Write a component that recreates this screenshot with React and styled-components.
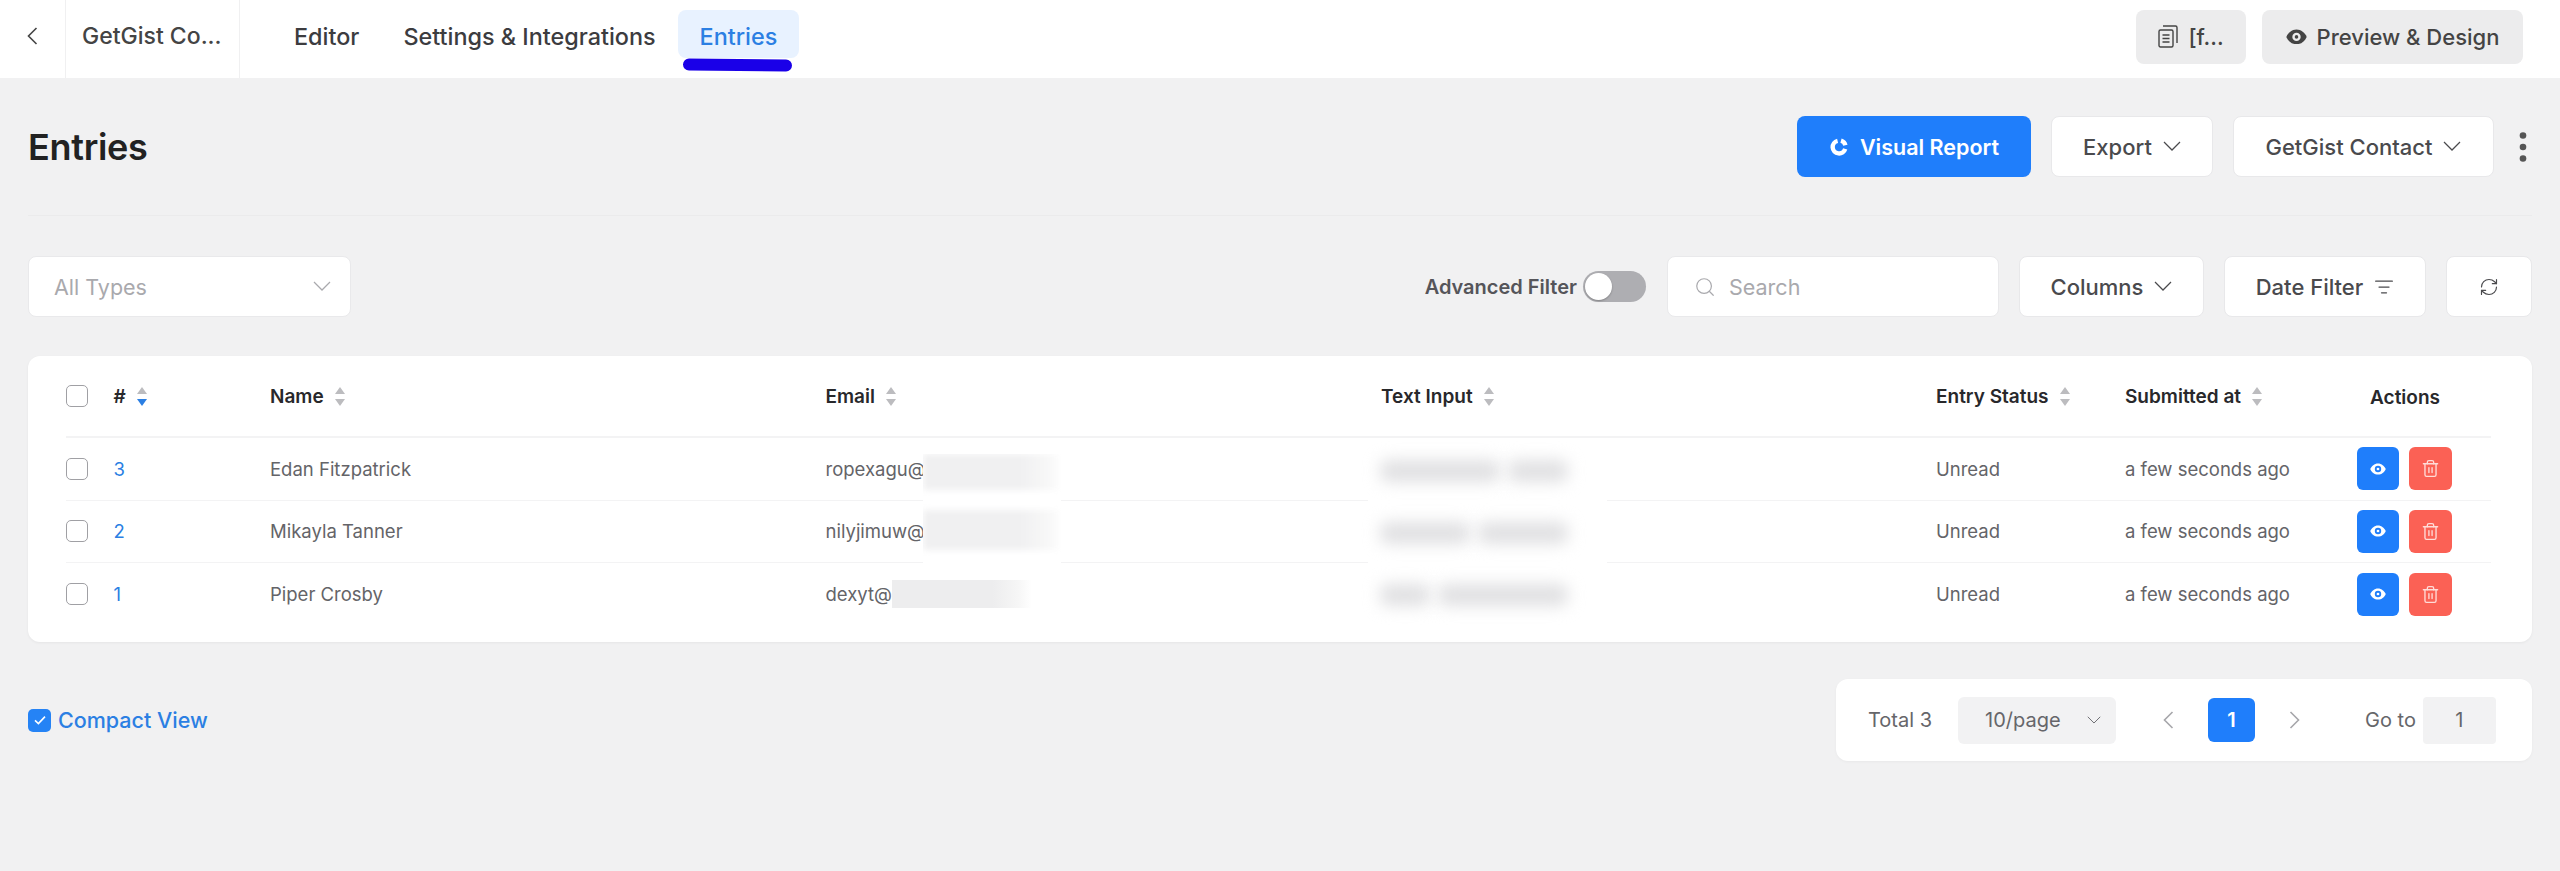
import React from 'react';
import styled, { createGlobalStyle } from 'styled-components';
import { Trash2, Search, RefreshCw, ListFilter } from 'lucide-react';

const GlobalStyle = createGlobalStyle`
  html, body {
    margin: 0;
    padding: 0;
    background: #f1f1f2;
    font-family: Inter, "Liberation Sans", sans-serif;
    overflow: hidden;
  }
`;

const Page = styled.div`
  width: 2560px;
  height: 871px;
  background: #f1f1f2;
`;

const TopBar = styled.div`
  height: 78px;
  background: #fff;
  display: flex;
  align-items: stretch;
  padding-right: 37px;
`;

const BackCell = styled.div`
  width: 66px;
  flex: none;
  display: flex;
  align-items: center;
  padding: 0 0 6px 27px;
  box-sizing: border-box;
  color: #444;
  border-right: 1px solid #f0f0f1;
`;

const FormName = styled.div`
  width: 174px;
  flex: none;
  box-sizing: border-box;
  padding: 0 0 6px 16px;
  display: flex;
  align-items: center;
  font-size: 23px;
  font-weight: 500;
  color: #444;
  border-right: 1px solid #f0f0f1;
`;

const Tabs = styled.div`
  display: flex;
  align-items: flex-start;
  margin-left: 32px;
  padding-top: 10px;
`;

const Tab = styled.div`
  position: relative;
  height: 48px;
  padding: 4px 22px 0;
  box-sizing: border-box;
  display: flex;
  align-items: center;
  border-radius: 8px;
  font-size: 23.4px;
  font-weight: 500;
  color: ${(p) => (p.$active ? '#2b7fe3' : '#3c3c3f')};
  background: ${(p) => (p.$active ? '#e8f2ff' : 'transparent')};
`;

const Scribble = styled.span`
  position: absolute;
  left: 5px;
  right: 8px;
  bottom: -13px;
  height: 12px;
  border-radius: 6px;
  background: #1a00e8;
  transform: rotate(0.6deg);
`;

const TopActions = styled.div`
  margin-left: auto;
  display: flex;
  align-items: center;
  gap: 16px;
  padding-bottom: 5px;
`;

const GreyButton = styled.div`
  height: 54px;
  width: ${(p) => p.$w}px;
  box-sizing: border-box;
  display: flex;
  align-items: center;
  justify-content: center;
  gap: 10px;
  border-radius: 8px;
  background: #ececed;
  color: #444;
  font-size: 22px;
  font-weight: 500;
`;

const Content = styled.div`
  padding: 0 28px;
`;

const HeaderRow = styled.div`
  height: 138px;
  box-sizing: border-box;
  display: flex;
  align-items: center;
  justify-content: space-between;
  border-bottom: 1px solid #ebebec;
`;

const Title = styled.h1`
  margin: 0;
  font-size: 36px;
  font-weight: 600;
  color: #222;
  letter-spacing: -0.3px;
`;

const HeaderActions = styled.div`
  display: flex;
  align-items: center;
  gap: 20px;
`;

const PrimaryButton = styled.div`
  height: 61px;
  width: 234px;
  box-sizing: border-box;
  display: flex;
  align-items: center;
  justify-content: center;
  gap: 11px;
  border-radius: 8px;
  background: #1f7efb;
  color: #fff;
  font-size: 21.5px;
  font-weight: 600;
`;

const WhiteButton = styled.div`
  height: 61px;
  width: ${(p) => p.$w}px;
  box-sizing: border-box;
  display: flex;
  align-items: center;
  justify-content: center;
  gap: 11px;
  border-radius: 8px;
  background: #fff;
  border: 1px solid #e8e8ea;
  color: #4a4a4d;
  font-size: 22px;
  font-weight: 500;
  flex: none;
`;

const MoreButton = styled.div`
  width: 18px;
  display: flex;
  justify-content: center;
  color: #555;
`;

const FilterRow = styled.div`
  margin-top: 40px;
  height: 61px;
  display: flex;
  align-items: center;
`;

const TypeSelect = styled.div`
  width: 323px;
  height: 61px;
  box-sizing: border-box;
  display: flex;
  align-items: center;
  justify-content: space-between;
  padding: 0 19px 0 25px;
  background: #fff;
  border: 1px solid #e9e9eb;
  border-radius: 8px;
  color: #a9a9ad;
  font-size: 21.5px;
`;

const FilterActions = styled.div`
  margin-left: auto;
  display: flex;
  align-items: center;
  gap: 20px;
`;

const AdvancedFilter = styled.div`
  display: flex;
  align-items: center;
  gap: 6px;
  margin-right: 1px;
  color: #55555a;
  font-size: 20px;
  font-weight: 600;
`;

const Toggle = styled.span`
  position: relative;
  display: block;
  width: 63px;
  height: 31px;
  border-radius: 16px;
  background: #aeaeb2;
`;

const ToggleKnob = styled.span`
  position: absolute;
  left: 2px;
  top: 2px;
  width: 27px;
  height: 27px;
  border-radius: 50%;
  background: #fff;
  box-shadow: 0 1px 2px rgba(0, 0, 0, 0.25);
`;

const SearchBox = styled.div`
  width: 332px;
  height: 61px;
  box-sizing: border-box;
  display: flex;
  align-items: center;
  gap: 13px;
  padding-left: 26px;
  background: #fff;
  border: 1px solid #e9e9eb;
  border-radius: 8px;
  color: #a9a9ad;
  font-size: 21.5px;
`;

const Card = styled.div`
  position: relative;
  margin-top: 39px;
  height: 286px;
  box-sizing: border-box;
  padding-left: 38px;
  background: #fff;
  border-radius: 12px;
  box-shadow: 0 1px 3px rgba(0, 0, 0, 0.05);
`;

const Row = styled.div`
  display: grid;
  grid-template-columns: 47.5px 156.5px 555.5px 555.5px 555px 189px 232px 134px;
  width: 2425px;
  height: ${(p) => (p.$head ? 82 : 62.5)}px;
  align-items: center;
  box-sizing: border-box;
  border-bottom: ${(p) => (p.$last ? 0 : p.$head ? 2 : 1)}px solid #f3f3f4;
  font-size: 18.5px;
  color: #646468;
`;

const Checkbox = styled.span`
  display: block;
  width: 22px;
  height: 22px;
  box-sizing: border-box;
  border: 1.5px solid #a0a0a4;
  border-radius: 5px;
  background: #fff;
`;

const HeadCell = styled.div`
  display: flex;
  align-items: center;
  gap: 11px;
  font-size: 19px;
  font-weight: 600;
  color: #28282b;
`;

const ActionsHead = styled.div`
  font-size: 19px;
  font-weight: 600;
  color: #28282b;
  text-align: center;
  width: 96px;
  margin-top: 2px;
`;

const SortStack = styled.span`
  display: flex;
  flex-direction: column;
  gap: 5px;
`;

const Arrow = styled.span`
  display: block;
  width: 0;
  height: 0;
  border-left: 5.5px solid transparent;
  border-right: 5.5px solid transparent;
  ${(p) =>
    p.$up
      ? 'border-bottom: 7px solid #bcbcbf;'
      : `border-top: 7px solid ${p.$on ? '#2b7fe3' : '#bcbcbf'};`}
`;

const IdCell = styled.div`
  color: #2b7fe3;
`;

// white patches that hide private values in the table
const EmailPatch = styled.div`
  position: absolute;
  left: 895px;
  top: 98px;
  width: 138px;
  height: 110px;
  background: #fff;
  display: flex;
  flex-direction: column;
  gap: 20px;
  overflow: hidden;
`;

const EmailBlur = styled.div`
  height: ${(p) => p.$h}px;
  background: linear-gradient(90deg, #f0f0f1 70%, #f8f8f8 92%, #fff);
  filter: blur(3px);
`;

const LastEmailBlur = styled.div`
  position: absolute;
  left: 864px;
  top: 224px;
  width: 140px;
  height: 28px;
  background: linear-gradient(90deg, #ededee 72%, #f6f6f6 90%, #fff);
`;

const TextPatch = styled.div`
  position: absolute;
  left: 1340px;
  top: 82px;
  width: 239px;
  height: 188px;
  background: #fff;
  display: flex;
  flex-direction: column;
  justify-content: space-around;
  padding: 2px 14px 0 12px;
  box-sizing: border-box;
`;

const SmudgeRow = styled.div`
  display: flex;
  gap: 8px;
  height: 22px;
`;

const Smudge = styled.span`
  display: block;
  width: ${(p) => p.$w}px;
  background: #e0e0e2;
  border-radius: 8px;
  filter: blur(8px);
`;

const Actions = styled.div`
  display: flex;
  gap: 10px;
`;

const IconButton = styled.div`
  width: ${(p) => p.$w}px;
  height: 43px;
  border-radius: 6px;
  display: flex;
  align-items: center;
  justify-content: center;
  color: ${(p) => p.$fg};
  background: ${(p) => p.$bg};
`;

const BottomRow = styled.div`
  margin-top: 37px;
  display: flex;
  align-items: center;
  justify-content: space-between;
`;

const CompactToggle = styled.div`
  display: flex;
  align-items: center;
  gap: 7px;
  color: #2b7fe3;
  font-size: 21.5px;
  font-weight: 500;
`;

const CheckedBox = styled.span`
  display: flex;
  align-items: center;
  justify-content: center;
  width: 23px;
  height: 23px;
  border-radius: 5px;
  background: #2583f5;
`;

const Pager = styled.div`
  width: 696px;
  height: 82px;
  box-sizing: border-box;
  display: flex;
  align-items: center;
  padding-left: 32px;
  background: #fff;
  border-radius: 12px;
  box-shadow: 0 1px 3px rgba(0, 0, 0, 0.04);
  color: #66666a;
  font-size: 20px;
`;

const PageSize = styled.div`
  width: 158px;
  height: 47px;
  margin-left: 26px;
  box-sizing: border-box;
  display: flex;
  align-items: center;
  justify-content: space-between;
  padding: 0 15px 0 27px;
  background: #f2f2f3;
  border-radius: 6px;
`;

const PageArrow = styled.span`
  display: flex;
  justify-content: center;
  width: 24px;
  color: #a6a6aa;
  margin: ${(p) => p.$m};
`;

const PageNumber = styled.div`
  width: 47px;
  height: 44px;
  display: flex;
  align-items: center;
  justify-content: center;
  border-radius: 6px;
  background: #1f7efb;
  color: #fff;
  font-weight: 600;
`;

const GoTo = styled.div`
  width: 73px;
  height: 47px;
  margin-left: 7px;
  display: flex;
  align-items: center;
  justify-content: center;
  background: #f2f2f3;
  border-radius: 4px;
`;

const ChevDown = ({ w = 18 }) => (
  <svg width={w} height={w * 0.56} viewBox="0 0 18 10" fill="none" stroke="currentColor" strokeWidth="1.2">
    <path d="M1 1l8 8 8-8" />
  </svg>
);

const ChevSide = ({ right, w = 11, h = 18 }) => (
  <svg width={w} height={h} viewBox="0 0 11 18" fill="none" stroke="currentColor" strokeWidth="1.6">
    <path d={right ? 'M1.5 1l8 8-8 8' : 'M9.5 1l-8 8 8 8'} />
  </svg>
);

const EyeIcon = ({ size = 16, hole }) => (
  <svg width={size} height={size * 0.75} viewBox="0 0 20 15">
    <path fill="currentColor" d="M10 0.5C5.5 0.5 2 3.6 0.3 7.5 2 11.4 5.5 14.5 10 14.5s8-3.1 9.7-7C18 3.6 14.5 0.5 10 0.5z" />
    <circle cx="10" cy="7.5" r="4" fill={hole} />
    <circle cx="10" cy="7.5" r="1.7" fill="currentColor" />
  </svg>
);

const DocsIcon = () => (
  <svg width="20" height="23" viewBox="0 0 20 23" fill="none" stroke="currentColor" strokeWidth="1.4">
    <rect x="1" y="5" width="14" height="17" rx="1.5" />
    <path d="M5 1h12.5a1.5 1.5 0 0 1 1.5 1.5V18" />
    <path d="M4.5 10h7M4.5 13.5h7M4.5 17h7" />
  </svg>
);

const PieIcon = () => (
  <svg width="20" height="20" viewBox="0 0 20 20" fill="none" stroke="#fff" strokeWidth="4.4">
    <path d="M8.6 3.8A6.4 6.4 0 1 0 16.2 11.8" />
    <path d="M12 3.6A6.4 6.4 0 0 1 16.4 8.2" />
  </svg>
);

const DotsIcon = () => (
  <svg width="8" height="30" viewBox="0 0 8 30" fill="currentColor">
    <circle cx="4" cy="3.5" r="3.3" />
    <circle cx="4" cy="15" r="3.3" />
    <circle cx="4" cy="26.5" r="3.3" />
  </svg>
);

const Sort = ({ on }) => (
  <SortStack>
    <Arrow $up />
    <Arrow $on={on} />
  </SortStack>
);

const columns = ['Name', 'Email', 'Text Input', 'Entry Status', 'Submitted at'];

const rows = [
  { id: 3, name: 'Edan Fitzpatrick', email: 'ropexagu@', smudges: [120, 60] },
  { id: 2, name: 'Mikayla Tanner', email: 'nilyjimuw@', smudges: [90, 90] },
  { id: 1, name: 'Piper Crosby', email: 'dexyt@', smudges: [50, 130] },
];

export default function App() {
  return (
    <Page>
      <GlobalStyle />
      <TopBar>
        <BackCell>
          <ChevSide />
        </BackCell>
        <FormName>GetGist Co...</FormName>
        <Tabs>
          <Tab>Editor</Tab>
          <Tab>Settings &amp; Integrations</Tab>
          <Tab $active>
            Entries
            <Scribble />
          </Tab>
        </Tabs>
        <TopActions>
          <GreyButton $w={110}>
            <DocsIcon />
            [f...
          </GreyButton>
          <GreyButton $w={261}>
            <EyeIcon size={21} hole="#ececed" />
            Preview &amp; Design
          </GreyButton>
        </TopActions>
      </TopBar>

      <Content>
        <HeaderRow>
          <Title>Entries</Title>
          <HeaderActions>
            <PrimaryButton>
              <PieIcon />
              Visual Report
            </PrimaryButton>
            <WhiteButton $w={162}>
              Export
              <ChevDown />
            </WhiteButton>
            <WhiteButton $w={261}>
              GetGist Contact
              <ChevDown />
            </WhiteButton>
            <MoreButton>
              <DotsIcon />
            </MoreButton>
          </HeaderActions>
        </HeaderRow>

        <FilterRow>
          <TypeSelect>
            All Types
            <ChevDown />
          </TypeSelect>
          <FilterActions>
            <AdvancedFilter>
              Advanced Filter
              <Toggle>
                <ToggleKnob />
              </Toggle>
            </AdvancedFilter>
            <SearchBox>
              <Search size={22} strokeWidth={1.3} />
              Search
            </SearchBox>
            <WhiteButton $w={185}>
              Columns
              <ChevDown />
            </WhiteButton>
            <WhiteButton $w={202}>
              Date Filter
              <ListFilter size={20} strokeWidth={1.5} />
            </WhiteButton>
            <WhiteButton $w={86}>
              <RefreshCw size={20} strokeWidth={1.4} />
            </WhiteButton>
          </FilterActions>
        </FilterRow>

        <Card>
          <Row $head>
            <Checkbox />
            <HeadCell>
              #
              <Sort on />
            </HeadCell>
            {columns.map((c) => (
              <HeadCell key={c}>
                {c}
                <Sort />
              </HeadCell>
            ))}
            <ActionsHead>Actions</ActionsHead>
          </Row>
          {rows.map((r, i) => (
            <Row key={r.id} $last={i === rows.length - 1}>
              <Checkbox />
              <IdCell>{r.id}</IdCell>
              <div>{r.name}</div>
              <div>{r.email}</div>
              <div />
              <div>Unread</div>
              <div>a few seconds ago</div>
              <Actions>
                <IconButton $w={42} $bg="#1f7efb" $fg="#fff">
                  <EyeIcon hole="#1f7efb" />
                </IconButton>
                <IconButton $w={43} $bg="#fb6155" $fg="#ffdcd8">
                  <Trash2 size={19} strokeWidth={1.7} />
                </IconButton>
              </Actions>
            </Row>
          ))}
          <EmailPatch>
            <EmailBlur $h={36} />
            <EmailBlur $h={40} />
          </EmailPatch>
          <LastEmailBlur />
          <TextPatch>
            {rows.map((r) => (
              <SmudgeRow key={r.id}>
                {r.smudges.map((w) => (
                  <Smudge key={w} $w={w} />
                ))}
              </SmudgeRow>
            ))}
          </TextPatch>
        </Card>

        <BottomRow>
          <CompactToggle>
            <CheckedBox>
              <svg width="14" height="14" viewBox="0 0 14 14" fill="none" stroke="#fff" strokeWidth="1.6">
                <path d="M2 7.4l3.4 3.2L12 3.6" />
              </svg>
            </CheckedBox>
            Compact View
          </CompactToggle>
          <Pager>
            Total 3
            <PageSize>
              10/page
              <ChevDown w={14} />
            </PageSize>
            <PageArrow $m="0 28px 0 40px">
              <ChevSide />
            </PageArrow>
            <PageNumber>1</PageNumber>
            <PageArrow $m="0 59px 0 27px">
              <ChevSide right />
            </PageArrow>
            Go to
            <GoTo>1</GoTo>
          </Pager>
        </BottomRow>
      </Content>
    </Page>
  );
}
